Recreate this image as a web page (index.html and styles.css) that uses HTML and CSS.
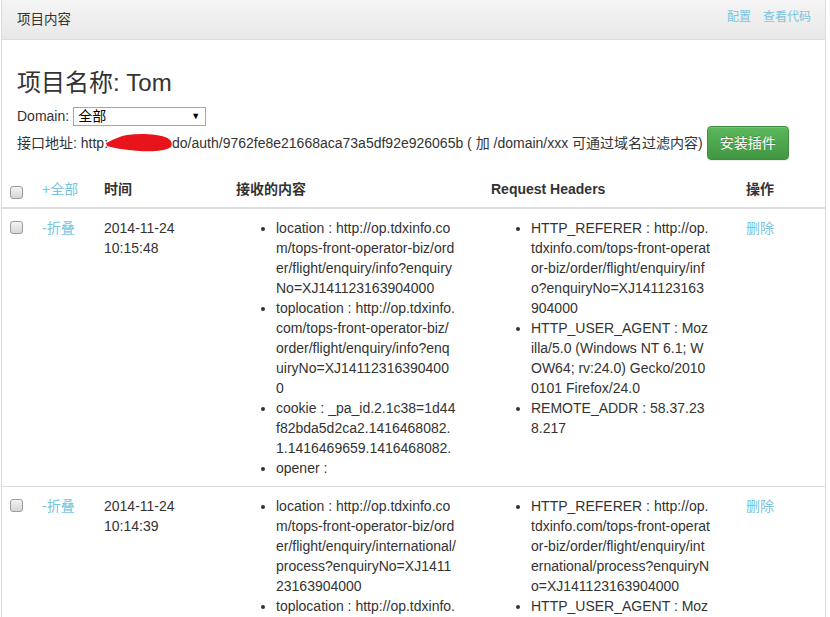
FILE: index.html
```html
<!DOCTYPE html>
<html lang="zh-CN">
<head>
<meta charset="utf-8">
<title>项目内容</title>
<link rel="stylesheet" href="styles.css">
</head>
<body>
<div class="panel">
  <div class="panel-heading">
    <span class="panel-title">项目内容</span>
    <span class="heading-links"><a href="#">配置</a><a href="#">查看代码</a></span>
  </div>
  <div class="panel-body">
    <h3 class="project-name">项目名称: Tom</h3>
    <div class="domain-row">
      <span>Domain:</span>
      <span class="fake-select"><span>全部</span><span class="caret">▼</span></span>
    </div>
    <div class="api-row">接口地址: http:<svg class="redact" width="66" height="20" viewBox="0 0 66 20"><path d="M0 10 C5 8 11 4 21 2 C35 0 50 1 59 4 C65 6 67 10 65 14 C59 18 47 19 33 18 C19 17 8 15 1 13 Z" fill="#e8141b"/></svg>do/auth/9762fe8e21668aca73a5df92e926065b ( 加 /domain/xxx 可通过域名过滤内容) <button class="btn-success" type="button">安装插件</button></div>
  </div>
  <table class="data-table">
    <colgroup>
      <col class="c-check"><col class="c-toggle"><col class="c-time"><col class="c-body"><col class="c-headers"><col>
    </colgroup>
    <thead>
      <tr>
        <th><input type="checkbox" class="chk"></th>
        <th><a href="#" class="toggle-all">+全部</a></th>
        <th>时间</th>
        <th>接收的内容</th>
        <th>Request Headers</th>
        <th>操作</th>
      </tr>
    </thead>
    <tbody>
      <tr>
        <td><input type="checkbox" class="chk"></td>
        <td><a href="#">-折叠</a></td>
        <td>2014-11-24 10:15:48</td>
        <td>
          <ul class="kv">
            <li>location : http://op.tdxinfo.com/tops-front-operator-biz/order/flight/enquiry/info?enquiryNo=XJ141123163904000</li>
            <li>toplocation : http://op.tdxinfo.com/tops-front-operator-biz/order/flight/enquiry/info?enquiryNo=XJ141123163904000</li>
            <li>cookie : _pa_id.2.1c38=1d44f82bda5d2ca2.1416468082.1.1416469659.1416468082.</li>
            <li>opener : </li>
          </ul>
        </td>
        <td>
          <ul class="kv">
            <li>HTTP_REFERER : http://op.tdxinfo.com/tops-front-operator-biz/order/flight/enquiry/info?enquiryNo=XJ141123163904000</li>
            <li>HTTP_USER_AGENT : Mozilla/5.0 (Windows NT 6.1; WOW64; rv:24.0) Gecko/20100101 Firefox/24.0</li>
            <li>REMOTE_ADDR : 58.37.238.217</li>
          </ul>
        </td>
        <td><a href="#">删除</a></td>
      </tr>
      <tr>
        <td><input type="checkbox" class="chk"></td>
        <td><a href="#">-折叠</a></td>
        <td>2014-11-24 10:14:39</td>
        <td>
          <ul class="kv">
            <li>location : http://op.tdxinfo.com/tops-front-operator-biz/order/flight/enquiry/international/process?enquiryNo=XJ141123163904000</li>
            <li>toplocation : http://op.tdxinfo.com/tops-front-operator-biz/order/flight/enquiry/international/process?enquiryNo=XJ141123163904000</li>
            <li>cookie : _pa_id.2.1c38=1d44f82bda5d2ca2.1416468082.1.1416469659.1416468082.</li>
            <li>opener : </li>
          </ul>
        </td>
        <td>
          <ul class="kv">
            <li>HTTP_REFERER : http://op.tdxinfo.com/tops-front-operator-biz/order/flight/enquiry/international/process?enquiryNo=XJ141123163904000</li>
            <li>HTTP_USER_AGENT : Mozilla/5.0 (Windows NT 6.1; WOW64; rv:24.0) Gecko/20100101 Firefox/24.0</li>
            <li>REMOTE_ADDR : 58.37.238.217</li>
          </ul>
        </td>
        <td><a href="#">删除</a></td>
      </tr>
    </tbody>
  </table>
</div>
</body>
</html>
```

FILE: styles.css
```css
* { box-sizing: border-box; }

html, body {
  margin: 0;
  padding: 0;
  background: #fff;
}

body {
  font-family: "Liberation Sans", Arial, "Noto Sans CJK SC", sans-serif;
  font-size: 14px;
  line-height: 20px;
  color: #333;
}

a {
  color: #7ac4de;
  text-decoration: none;
}

.panel {
  width: 825px;
  margin: -1px 0 0 1px;
  border: 1px solid #ddd;
  background: #fff;
}

.panel-heading {
  height: 40px;
  display: flex;
  align-items: center;
  justify-content: space-between;
  padding: 0 14px 0 15px;
  background: linear-gradient(to bottom, #f5f5f5 0%, #e8e8e8 100%);
  border-bottom: 1px solid #ddd;
}

.panel-title {
  font-size: 13.5px;
  color: #333;
  padding-top: 1px;
}

.heading-links {
  display: flex;
  gap: 12px;
  font-size: 12px;
  margin-top: -5px;
}

.panel-body {
  padding: 15px 15px 11px;
}

.project-name {
  margin: 15px 0 10px;
  font-size: 24px;
  line-height: 26px;
  font-weight: normal;
  color: #333;
}

.domain-row {
  display: flex;
  align-items: center;
  gap: 4px;
  height: 20px;
}

.fake-select {
  display: inline-flex;
  align-items: center;
  justify-content: space-between;
  width: 133px;
  height: 19px;
  padding: 0 5px 0 4px;
  border: 1px solid #a6a6a6;
  background: #fff;
  color: #000;
}

.caret {
  font-size: 9px;
  line-height: 1;
}

.api-row {
  line-height: 20px;
}

.redact {
  vertical-align: -5px;
  margin-left: -2px;
}

.btn-success {
  font-family: inherit;
  font-size: 14px;
  line-height: 20px;
  padding: 6px 12px;
  color: #fff;
  border: 1px solid #3e8f3e;
  border-radius: 4px;
  background: linear-gradient(to bottom, #5cb85c 0%, #419641 100%);
  text-shadow: 0 -1px 0 rgba(0, 0, 0, 0.2);
  box-shadow: inset 0 1px 0 rgba(255, 255, 255, 0.15), 0 1px 1px rgba(0, 0, 0, 0.075);
  vertical-align: baseline;
}

.data-table {
  width: 100%;
  border-collapse: collapse;
  table-layout: fixed;
}

.c-check { width: 32px; }
.c-toggle { width: 62px; }
.c-time { width: 132px; }
.c-body { width: 255px; }
.c-headers { width: 255px; }

.data-table th {
  padding: 8px;
  text-align: left;
  font-weight: bold;
  vertical-align: bottom;
  border-bottom: 2px solid #ddd;
}

.data-table th .toggle-all {
  font-weight: normal;
}

.data-table td {
  padding: 9px 8px 8px;
  vertical-align: top;
  border-top: 1px solid #ddd;
}

.chk {
  appearance: none;
  -webkit-appearance: none;
  display: block;
  width: 13px;
  height: 13px;
  margin: 3px 0 0;
  border: 1px solid #9c9c9c;
  border-radius: 3px;
  background: linear-gradient(to bottom, #f4f4f4 0%, #d6d6d6 100%);
}

.kv {
  margin: 0;
  padding-left: 40px;
}

.kv li {
  width: 180px;
  word-break: break-all;
}
```
